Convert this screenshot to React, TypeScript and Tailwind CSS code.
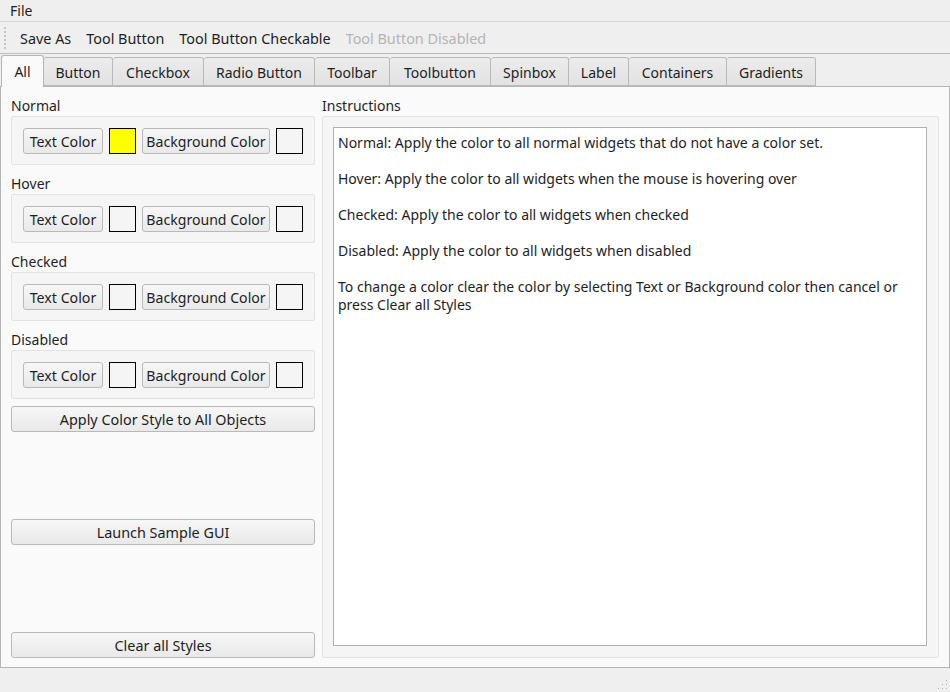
import React from "react";

const font = { fontFamily: '"Noto Sans", "DejaVu Sans", sans-serif' };

function Btn({ children, className = "" }: { children: React.ReactNode; className?: string }) {
  return (
    <div
      className={
        "h-[26px] flex items-center justify-center rounded-[3px] border border-[#b9b9b9] bg-gradient-to-b from-[#f7f7f7] to-[#e9e9e9] text-[#1e1e1e] pt-[2px] " +
        className
      }
    >
      {children}
    </div>
  );
}

function Swatch({ color }: { color: string }) {
  return <div className="w-[27px] h-[26px] border border-black" style={{ background: color }} />;
}

function ColorGroup({ label, text }: { label: string; text: string }) {
  return (
    <div className="flex flex-col mb-[7px]">
      <div className="h-[22px] flex items-center text-[14px] text-[#1e1e1e]">{label}</div>
      <div className="h-[49px] border border-[#e2e2e2] rounded-[2px] bg-[#f5f5f5] flex items-center pl-[11px] gap-[6px]">
        <Btn className="w-[80px] text-[14.2px]">Text Color</Btn>
        <Swatch color={text} />
        <Btn className="w-[128px] text-[14.1px]">Background Color</Btn>
        <Swatch color="#f5f5f5" />
      </div>
    </div>
  );
}

const tabs = [
  ["Button", 69],
  ["Checkbox", 91],
  ["Radio Button", 111],
  ["Toolbar", 75],
  ["Toolbutton", 101],
  ["Spinbox", 78],
  ["Label", 60],
  ["Containers", 98],
  ["Gradients", 89],
] as const;

export default function App() {
  return (
    <div className="w-[950px] h-[692px] bg-[#efefef] flex flex-col overflow-hidden text-[#1e1e1e]" style={font}>
      {/* menu bar */}
      <div className="h-[22px] flex items-center px-[10px] text-[14px] border-b border-[#d8d8d8]">File</div>
      {/* toolbar */}
      <div className="h-[32px] flex items-center text-[14.4px] border-b border-[#bdbdbd] pt-[3px]">
        <div className="ml-[4px] w-[3px] h-[22px] -mt-[3px] border-l-2 border-dotted border-[#c4c4c4]" />
        <span className="ml-[13px]">Save As</span>
        <span className="ml-[15px]">Tool Button</span>
        <span className="ml-[15px]">Tool Button Checkable</span>
        <span className="ml-[15px] text-[#b4b4b4]">Tool Button Disabled</span>
      </div>
      {/* tabs */}
      <div className="h-[32px] flex items-end pl-[1px]">
        <div className="relative z-10 w-[43px] h-[32px] -mb-[1px] bg-[#fafafa] border border-[#b5b5b5] border-b-0 rounded-t-[3px] flex items-center justify-center text-[14px]">
          All
        </div>
        {tabs.map(([t, w]) => (
          <div
            key={t}
            className="h-[29px] border border-[#b9b9b9] border-l-0 rounded-t-[3px] bg-gradient-to-b from-[#ececec] to-[#e2e2e2] flex items-center justify-center text-[14px] pt-[1px]"
            style={{ width: w }}
          >
            {t}
          </div>
        ))}
      </div>
      {/* panel */}
      <div className="h-[582px] bg-[#fafafa] border border-[#b5b5b5] flex pl-[10px] pr-[10px] pt-[7px] pb-[9px] gap-[7px]">
        <div className="w-[304px] flex flex-col">
          <ColorGroup label="Normal" text="#ffff00" />
          <ColorGroup label="Hover" text="#f5f5f5" />
          <ColorGroup label="Checked" text="#f5f5f5" />
          <ColorGroup label="Disabled" text="#f5f5f5" />
          <Btn className="w-full text-[14.4px]">Apply Color Style to All Objects</Btn>
          <div className="flex-1" />
          <Btn className="w-full text-[14.4px]">Launch Sample GUI</Btn>
          <div className="flex-1" />
          <Btn className="w-full text-[14.4px]">Clear all Styles</Btn>
        </div>
        <div className="flex-1 flex flex-col">
          <div className="h-[22px] flex items-center text-[14px]">Instructions</div>
          <div className="flex-1 border border-[#e2e2e2] rounded-[2px] bg-[#f5f5f5] pt-[10px] pl-[10px] pr-[11px] pb-[11px] flex">
            <div className="flex-1 bg-white border border-[#b0b0b0] px-[4px] pt-[6px] text-[14px] leading-[18px] text-[#1e1e1e]">
              <p>Normal: Apply the color to all normal widgets that do not have a color set.</p>
              <p className="mt-[18px]">Hover: Apply the color to all widgets when the mouse is hovering over</p>
              <p className="mt-[18px]">Checked: Apply the color to all widgets when checked</p>
              <p className="mt-[18px]">Disabled: Apply the color to all widgets when disabled</p>
              <p className="mt-[18px]">
                To change a color clear the color by selecting Text or Background color then cancel or press Clear all Styles
              </p>
            </div>
          </div>
        </div>
      </div>
      {/* status bar */}
      <div className="flex-1 relative">
        <svg className="absolute right-[2px] bottom-[2px]" width="12" height="12" viewBox="0 0 12 12">
          {[
            [10, 2],
            [10, 6],
            [6, 6],
            [10, 10],
            [6, 10],
            [2, 10],
          ].map(([x, y], i) => (
            <rect key={i} x={x} y={y} width="1" height="1" fill="#b0b0b0" />
          ))}
        </svg>
      </div>
    </div>
  );
}
